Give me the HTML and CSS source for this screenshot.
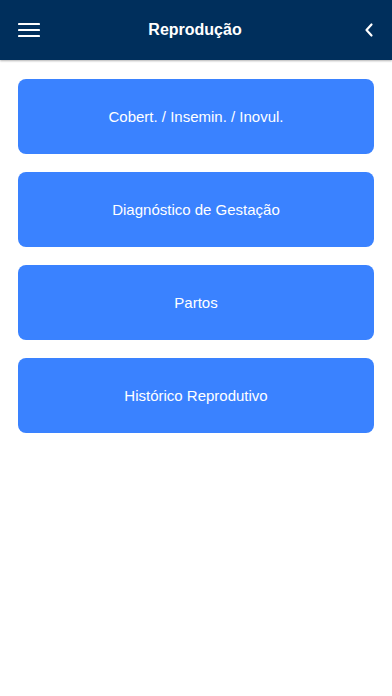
FILE: index.html
```html
<!DOCTYPE html>
<html lang="pt">
<head>
    <meta charset="UTF-8">
    <meta name="viewport" content="width=device-width, initial-scale=1.0">
    <title>Reprodução</title>
    <link rel="stylesheet" href="styles.css">
</head>
<body>

<header class="top-bar">
    <button class="icon-btn menu-btn" aria-label="Menu">
        <svg width="22" height="16" viewBox="0 0 22 16">
            <path d="M1 2h20M1 8h20M1 14h20" stroke="#fff" stroke-width="2.2" stroke-linecap="round"/>
        </svg>
    </button>
    <h1>Reprodução</h1>
    <button class="icon-btn back-btn" aria-label="Voltar">
        <svg width="10" height="16" viewBox="0 0 10 16">
            <path d="M7.5 2.5L2.5 8L7.5 13.5" fill="none" stroke="#fff" stroke-width="2.2" stroke-linecap="round" stroke-linejoin="round"/>
        </svg>
    </button>
</header>

<!-- opções do módulo -->
<div class="menu-list">
    <a href="#" class="menu-item">Cobert. / Insemin. / Inovul.</a>
    <a href="#" class="menu-item">Diagnóstico de Gestação</a>
    <a href="#" class="menu-item">Partos</a>
    <a href="#" class="menu-item">Histórico Reprodutivo</a>
</div>

</body>
</html>
```

FILE: styles.css
```css
body {
    font-family: Arial, "Liberation Sans", sans-serif;
    margin: 0;
    padding: 0;
    background-color: #fff;
}

.top-bar {
    height: 60px;
    background-color: #002f5c;
    display: flex;
    align-items: center;
    justify-content: space-between;
    padding: 0 18px 0 16px;
    box-shadow: 0 1px 2px rgba(0, 0, 0, 0.3);
}

.top-bar h1 {
    color: #fff;
    font-size: 16px;
    font-weight: bold;
    margin: 0;
}

.icon-btn {
    background: none;
    border: none;
    padding: 0;
    width: 28px;
    height: 28px;
    display: flex;
    align-items: center;
    cursor: pointer;
}

.menu-btn {
    justify-content: flex-start;
    padding-left: 2px;
}

.back-btn {
    justify-content: flex-end;
}

.menu-list {
    display: flex;
    flex-direction: column;
    gap: 18px;
    padding: 19px 18px;
}

.menu-item {
    height: 75px;
    display: flex;
    align-items: center;
    justify-content: center;
    background-color: #3a82ff;
    color: #fff;
    font-size: 15px;
    text-decoration: none;
    border-radius: 8px;
}
```
